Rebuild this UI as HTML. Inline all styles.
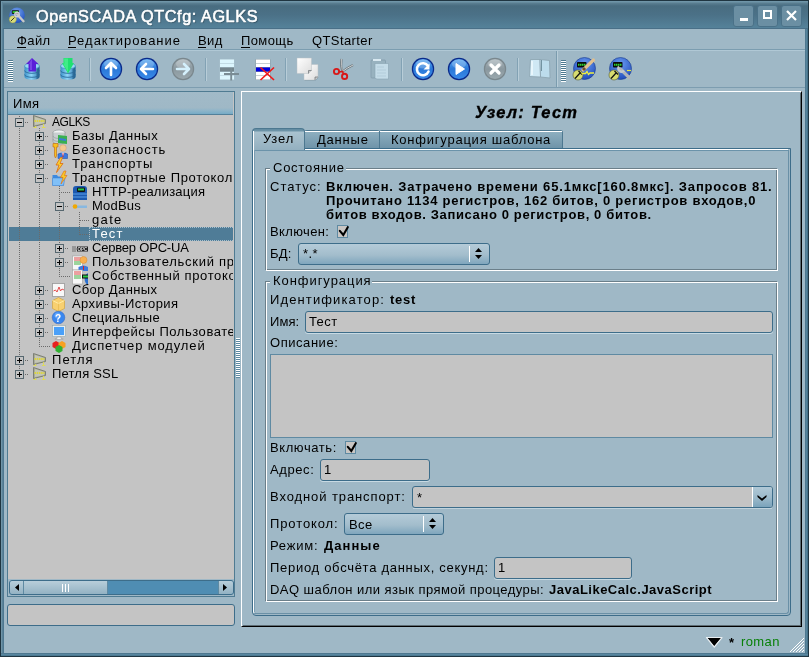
<!DOCTYPE html>
<html><head><meta charset="utf-8"><style>
*{box-sizing:border-box}
html,body{margin:0;padding:0}
body{width:809px;height:657px;overflow:hidden;position:relative;background:#9fb8c6;font-family:"Liberation Sans",sans-serif;font-size:13px;color:#000;letter-spacing:0.4px}
.a{position:absolute}
.t{position:absolute;white-space:nowrap;line-height:14px;will-change:transform}
.b{font-weight:bold;letter-spacing:0.75px}
svg{position:absolute;overflow:visible}
.exp{position:absolute;width:9px;height:9px;border:1px solid #56676f;background:#c4c4c4}
.exp:before{content:"";position:absolute;left:1px;top:3px;width:5px;height:1px;background:#000}
.exp.p:after{content:"";position:absolute;left:3px;top:1px;width:1px;height:5px;background:#000}
.dv{position:absolute;width:1px;background:repeating-linear-gradient(#6a6a6a 0,#6a6a6a 1px,transparent 1px,transparent 2px)}
.dh{position:absolute;height:1px;background:repeating-linear-gradient(90deg,#6a6a6a 0,#6a6a6a 1px,transparent 1px,transparent 2px)}
.edit{position:absolute;background:#c4c4c4;border:1px solid #3d6d8a;border-radius:3px}
.combo{position:absolute;border:1px solid #3d6d8a;border-radius:3px;background:linear-gradient(#b4cbd8,#a6bfcd 55%,#8badc0)}
.chk{position:absolute;width:12px;height:12px;border:1px solid #6d8797;background:#c4c4c4}
.sep{position:absolute;top:58px;width:2px;height:23px;border-left:1px solid #82a2b4;border-right:1px solid #b8cdd8}
.handle{position:absolute;width:5px;height:22px;background:repeating-linear-gradient(#4f7a90 0,#4f7a90 1px,#ffffff 1px,#ffffff 2px)}
</style></head><body>
<div class="a" style="left:0px;top:0px;width:809px;height:657px;background:#55819a"></div>
<div class="a" style="left:0px;top:0px;width:809px;height:1px;background:#1f3541"></div>
<div class="a" style="left:0px;top:0px;width:1px;height:657px;background:#1f3541"></div>
<div class="a" style="left:808px;top:0px;width:1px;height:657px;background:#1f3541"></div>
<div class="a" style="left:0px;top:656px;width:809px;height:1px;background:#1f3541"></div>
<div class="a" style="left:1px;top:1px;width:1px;height:655px;background:#6f95a8"></div>
<div class="a" style="left:2px;top:29px;width:1px;height:625px;background:#5a8299"></div>
<div class="a" style="left:3px;top:29px;width:1px;height:625px;background:#4e7890"></div>
<div class="a" style="left:805px;top:29px;width:1px;height:625px;background:#4e7890"></div>
<div class="a" style="left:806px;top:29px;width:1px;height:625px;background:#56849b"></div>
<div class="a" style="left:807px;top:29px;width:1px;height:627px;background:#46728a"></div>
<div class="a" style="left:1px;top:653px;width:807px;height:1px;background:#4e7890"></div>
<div class="a" style="left:1px;top:654px;width:807px;height:1px;background:#5987a0"></div>
<div class="a" style="left:1px;top:655px;width:807px;height:1px;background:#4d7a92"></div>
<div class="a" style="left:1px;top:1px;width:807px;height:28px;background:linear-gradient(#6f95a8 0px,#6f95a8 1px,#5b7f92 2px,#486c80 5px,#4b7187 14px,#55829a 27px,#4a7088 27px,#4a7088 28px)"></div>
<div class="a" style="left:1px;top:1px;width:1px;height:28px;background:#6f95a8"></div>
<div class="a" style="left:2px;top:2px;width:1px;height:27px;background:#5d8398"></div>
<div class="a" style="left:4px;top:29px;width:801px;height:624px;background:#9fb8c6"></div>
<svg style="left:8px;top:6px" width="18" height="18" viewBox="0 0 18 18">
<defs><radialGradient id="tig" cx="0.45" cy="0.3" r="0.7"><stop offset="0" stop-color="#7aa8f0"/><stop offset="1" stop-color="#2050c0"/></radialGradient></defs>
<circle cx="9" cy="9.2" r="7.8" fill="url(#tig)"/>
<rect x="3.8" y="4.2" width="7.2" height="3.7" rx="0.8" fill="#111"/><rect x="4.6" y="5" width="5.6" height="2.1" fill="#2ab830"/>
<circle cx="4.8" cy="13.3" r="3.6" fill="#d8dc78" stroke="#8a8c40" stroke-width="0.4"/><path d="M2.8 15.2 L6.5 11.5" stroke="#222" stroke-width="0.9"/>
<path d="M9 8.2 L15.5 15.2" stroke="#c8c8c8" stroke-width="2.4" stroke-linecap="round"/><circle cx="9" cy="8.5" r="2.2" fill="none" stroke="#d0d0d0" stroke-width="1.4"/>
</svg>
<div class="t" style="left:36px;top:7px;font-size:16.3px;line-height:18px;font-weight:normal;color:#fff;letter-spacing:0.55px;-webkit-text-stroke:0.55px #fff;text-shadow:1px 1px 1px rgba(30,50,60,0.5)">OpenSCADA QTCfg: AGLKS</div>
<div class="a" style="left:733px;top:5px;width:21px;height:22px;border:1px solid #4a7188;border-radius:3px;background:#6b8fa3"></div>
<div class="a" style="left:757px;top:5px;width:21px;height:22px;border:1px solid #4a7188;border-radius:3px;background:#6b8fa3"></div>
<div class="a" style="left:781px;top:5px;width:21px;height:22px;border:1px solid #4a7188;border-radius:3px;background:#6b8fa3"></div>
<div class="a" style="left:740px;top:18px;width:8px;height:3px;background:#fff"></div>
<div class="a" style="left:763px;top:10px;width:9px;height:9px;border:2px solid #fff;border-top-width:2px"></div>
<svg style="left:786px;top:10px" width="11" height="11"><path d="M1 1L10 10M10 1L1 10" stroke="#fff" stroke-width="2.2"/></svg>
<div class="a" style="left:4px;top:49px;width:801px;height:1px;background:#7b9db0"></div>
<div class="a" style="left:4px;top:50px;width:801px;height:1px;background:#b0c8d5"></div>
<div class="t " style="left:17px;top:34px;">Файл</div>
<div class="a" style="left:17px;top:47px;width:9px;height:1px;background:#000"></div>
<div class="t " style="left:68px;top:34px;letter-spacing:1px">Редактирование</div>
<div class="a" style="left:68px;top:47px;width:8px;height:1px;background:#000"></div>
<div class="t " style="left:198px;top:34px;">Вид</div>
<div class="a" style="left:198px;top:47px;width:8px;height:1px;background:#000"></div>
<div class="t " style="left:241px;top:34px;">Помощь</div>
<div class="a" style="left:241px;top:47px;width:9px;height:1px;background:#000"></div>
<div class="t " style="left:312px;top:34px;">QTStarter</div>
<div class="a" style="left:4px;top:87px;width:801px;height:1px;background:#7d9db0"></div>
<div class="handle" style="left:8px;top:60px"></div>
<div class="handle" style="left:561px;top:60px"></div>
<div class="sep" style="left:89px"></div>
<div class="sep" style="left:205px"></div>
<div class="sep" style="left:285px"></div>
<div class="sep" style="left:401px"></div>
<div class="sep" style="left:517px"></div>
<div class="a" style="left:556px;top:51px;width:1px;height:36px;background:#7b9cae"></div>
<div class="a" style="left:557px;top:51px;width:1px;height:36px;background:#b8cdd8"></div>
<svg style="left:99px;top:57px" width="24" height="24" viewBox="0 0 24 24">
<defs><linearGradient id="g111" x1="0" y1="0" x2="0" y2="1"><stop offset="0" stop-color="#5aa8f0"/><stop offset="0.5" stop-color="#2a78d8"/><stop offset="1" stop-color="#3a8ae8"/></linearGradient></defs>
<circle cx="12" cy="12" r="11.2" fill="#0a2a8a"/><circle cx="12" cy="12" r="10" fill="url(#g111)"/><ellipse cx="12" cy="7" rx="7" ry="4.5" fill="#fff" opacity="0.22"/><path d="M12 18 V6.5 M7 11 L12 6 L17 11" fill="none" stroke="#fff" stroke-width="2.6" stroke-linecap="round" stroke-linejoin="round"/></svg>
<svg style="left:135px;top:57px" width="24" height="24" viewBox="0 0 24 24">
<defs><linearGradient id="g147" x1="0" y1="0" x2="0" y2="1"><stop offset="0" stop-color="#5aa8f0"/><stop offset="0.5" stop-color="#2a78d8"/><stop offset="1" stop-color="#3a8ae8"/></linearGradient></defs>
<circle cx="12" cy="12" r="11.2" fill="#0a2a8a"/><circle cx="12" cy="12" r="10" fill="url(#g147)"/><ellipse cx="12" cy="7" rx="7" ry="4.5" fill="#fff" opacity="0.22"/><path d="M18 12 H6.5 M11 7 L6 12 L11 17" fill="none" stroke="#fff" stroke-width="2.6" stroke-linecap="round" stroke-linejoin="round"/></svg>
<svg style="left:171px;top:57px" width="24" height="24" viewBox="0 0 24 24">
<defs><linearGradient id="g183" x1="0" y1="0" x2="0" y2="1"><stop offset="0" stop-color="#a8b4ba"/><stop offset="0.5" stop-color="#8a989f"/><stop offset="1" stop-color="#9aa8ae"/></linearGradient></defs>
<circle cx="12" cy="12" r="11.2" fill="#7a878d"/><circle cx="12" cy="12" r="10" fill="url(#g183)"/><ellipse cx="12" cy="7" rx="7" ry="4.5" fill="#fff" opacity="0.22"/><path d="M6 12 H17.5 M13 7 L18 12 L13 17" fill="none" stroke="#d4f0fc" stroke-width="2.6" stroke-linecap="round" stroke-linejoin="round"/></svg>
<svg style="left:411px;top:57px" width="24" height="24" viewBox="0 0 24 24">
<defs><linearGradient id="g423" x1="0" y1="0" x2="0" y2="1"><stop offset="0" stop-color="#5aa8f0"/><stop offset="0.5" stop-color="#2a78d8"/><stop offset="1" stop-color="#3a8ae8"/></linearGradient></defs>
<circle cx="12" cy="12" r="11.2" fill="#0a2a8a"/><circle cx="12" cy="12" r="10" fill="url(#g423)"/><ellipse cx="12" cy="7" rx="7" ry="4.5" fill="#fff" opacity="0.22"/><path d="M17 9 A6 6 0 1 0 17.5 14.5" fill="none" stroke="#fff" stroke-width="2.6" stroke-linecap="round"/><path d="M12.5 12.5 L18.5 12.5 L18.5 6.5Z" fill="#fff"/></svg>
<svg style="left:447px;top:57px" width="24" height="24" viewBox="0 0 24 24">
<defs><linearGradient id="g459" x1="0" y1="0" x2="0" y2="1"><stop offset="0" stop-color="#5aa8f0"/><stop offset="0.5" stop-color="#2a78d8"/><stop offset="1" stop-color="#3a8ae8"/></linearGradient></defs>
<circle cx="12" cy="12" r="11.2" fill="#0a2a8a"/><circle cx="12" cy="12" r="10" fill="url(#g459)"/><ellipse cx="12" cy="7" rx="7" ry="4.5" fill="#fff" opacity="0.22"/><path d="M9 6.5 L17.5 12 L9 17.5Z" fill="#fff" stroke="#fff" stroke-width="1" stroke-linejoin="round"/></svg>
<svg style="left:483px;top:57px" width="24" height="24" viewBox="0 0 24 24">
<defs><linearGradient id="g495" x1="0" y1="0" x2="0" y2="1"><stop offset="0" stop-color="#a8b4ba"/><stop offset="0.5" stop-color="#8a989f"/><stop offset="1" stop-color="#9aa8ae"/></linearGradient></defs>
<circle cx="12" cy="12" r="11.2" fill="#7a878d"/><circle cx="12" cy="12" r="10" fill="url(#g495)"/><ellipse cx="12" cy="7" rx="7" ry="4.5" fill="#fff" opacity="0.22"/><path d="M8 8L16 16M16 8L8 16" stroke="#fff" stroke-width="3.2" stroke-linecap="round"/></svg>
<svg style="left:20px;top:57px" width="24" height="24" viewBox="0 0 24 24">
<defs><linearGradient id="dbg1" x1="0" x2="1"><stop offset="0" stop-color="#3a90c8"/><stop offset="0.45" stop-color="#8fd6f8"/><stop offset="1" stop-color="#2a78b0"/></linearGradient></defs>
<path d="M4.5 9 v11 a7.5 2.8 0 0 0 15 0 v-11" fill="url(#dbg1)"/>
<path d="M19.5 10 v10 a7.5 2.8 0 0 1 -3 2.2 v-10Z" fill="#1a4a70" opacity="0.5"/>
<path d="M4.5 13.5 a7.5 2.8 0 0 0 15 0 M4.5 17.5 a7.5 2.8 0 0 0 15 0" fill="none" stroke="#2a6a9a" stroke-width="0.9"/>
<ellipse cx="12" cy="9" rx="7.5" ry="2.8" fill="#9ad8f4" stroke="#3a88b8" stroke-width="0.6"/><path d="M12 1 L18.5 7 L16 7 L16 14.5 L8.5 14.5 L8.5 7 L6 7Z" fill="#5a20d8"/><path d="M11 3 L12 2 L12 13 L10 13 L10 7 L9 7Z" fill="#8a60f0" opacity="0.6"/></svg>
<svg style="left:56px;top:57px" width="24" height="24" viewBox="0 0 24 24">
<defs><linearGradient id="dbg2" x1="0" x2="1"><stop offset="0" stop-color="#3a90c8"/><stop offset="0.45" stop-color="#8fd6f8"/><stop offset="1" stop-color="#2a78b0"/></linearGradient></defs>
<path d="M4.5 9 v11 a7.5 2.8 0 0 0 15 0 v-11" fill="url(#dbg2)"/>
<path d="M19.5 10 v10 a7.5 2.8 0 0 1 -3 2.2 v-10Z" fill="#1a4a70" opacity="0.5"/>
<path d="M4.5 13.5 a7.5 2.8 0 0 0 15 0 M4.5 17.5 a7.5 2.8 0 0 0 15 0" fill="none" stroke="#2a6a9a" stroke-width="0.9"/>
<ellipse cx="12" cy="9" rx="7.5" ry="2.8" fill="#9ad8f4" stroke="#3a88b8" stroke-width="0.6"/><path d="M7.5 1 L16.5 1 L16.5 6 L18 6 L12 16.5 L6 6 L7.5 6Z" fill="#20e070"/><path d="M8 1.5 L12 1.5 L12 15 L7 6.5 L8.5 6.5Z" fill="#60f8a0" opacity="0.5"/></svg>
<svg style="left:218px;top:57px" width="24" height="24" viewBox="0 0 24 24">
<rect x="1.5" y="2" width="15" height="21" fill="#a8c0cc" rx="0.8"/>
<rect x="2" y="2.5" width="14" height="3.5" fill="#dcf6fe"/><rect x="2" y="6.5" width="14" height="3.5" fill="#dcf6fe"/><rect x="2" y="10.5" width="14" height="4" fill="#74868e"/><rect x="2" y="15" width="14" height="3.5" fill="#dcf6fe"/><rect x="2" y="19" width="14" height="3.5" fill="#dcf6fe"/>
<path d="M13.2 11 V23.5 M6 17 H21" stroke="#7a8c94" stroke-width="1.9"/></svg>
<svg style="left:254px;top:57px" width="24" height="24" viewBox="0 0 24 24">
<rect x="1.5" y="2" width="15" height="21" fill="#8c9ca4" rx="0.8"/>
<rect x="2" y="2.5" width="14" height="3.5" fill="#fff"/><rect x="2" y="6.5" width="14" height="3.5" fill="#fff"/><rect x="2" y="10.5" width="14" height="4" fill="#0000e0"/><rect x="2" y="15" width="14" height="3.5" fill="#fff"/><rect x="2" y="19" width="14" height="3.5" fill="#fff"/>
<path d="M6.5 10.5 L20 23 M20 10.5 L6.5 23" stroke="#f01818" stroke-width="1.7"/></svg>
<svg style="left:292px;top:54px" width="30" height="30" viewBox="0 0 30 30">
<defs><linearGradient id="cpg" x1="0" y1="0" x2="1" y2="1"><stop offset="0" stop-color="#ffffff"/><stop offset="1" stop-color="#dcdcdc"/></linearGradient></defs>
<path d="M12 10.5 H26 V23 L23 26 H12Z" fill="url(#cpg)" stroke="#b8c0c4" stroke-width="0.5"/><path d="M26 23 L23 23 L23 26" fill="#c8c8c8" stroke="#6a7074" stroke-width="0.7"/>
<path d="M5 4 H19.5 V16.5 L16.5 19.5 H5Z" fill="url(#cpg)" stroke="#b8c0c4" stroke-width="0.5"/><path d="M19.5 16.5 L16.5 16.5 L16.5 19.5" fill="#c8c8c8" stroke="#6a7074" stroke-width="0.7"/>
<path d="M12.5 26.5 H23.5 L26.5 23.5" fill="none" stroke="#7f98a6" stroke-width="0.8" opacity="0.6"/></svg>
<svg style="left:330px;top:54px" width="28" height="30" viewBox="0 0 28 30">
<path d="M11.5 5 Q10.5 12 12.5 17.5" fill="none" stroke="#6a7276" stroke-width="2"/><path d="M23 11 Q17 14 12.5 17.5" fill="none" stroke="#6a7276" stroke-width="2"/><path d="M23 11 Q17 14 12.5 17.5" fill="none" stroke="#e8ecee" stroke-width="0.8"/>
<path d="M11.5 5 Q11 12 12.5 17.5" fill="none" stroke="#f0f0f0" stroke-width="0.6"/>
<circle cx="6.5" cy="17.5" r="2.6" fill="none" stroke="#d81818" stroke-width="1.9"/><circle cx="14.6" cy="22.4" r="2.6" fill="none" stroke="#d81818" stroke-width="1.9"/><path d="M9 18 L12.5 17.5 L13.5 20" fill="none" stroke="#d81818" stroke-width="1.6"/></svg>
<svg style="left:368px;top:57px" width="24" height="24" viewBox="0 0 24 24">
<rect x="3" y="3" width="14.5" height="18" rx="1" fill="#98b2bf" stroke="#7c96a4" stroke-width="0.6"/><rect x="5" y="2" width="8" height="2" fill="#d8e8f0"/>
<path d="M7 6.5 H20.5 V22 H8.5 L7 20.5Z" fill="#c4dce8" stroke="#8aa4b2" stroke-width="0.6"/><path d="M9 10h7M9 13h9M9 16h9M9 19h9" stroke="#a8c2d0" stroke-width="0.6"/></svg>
<svg style="left:528px;top:57px" width="24" height="24" viewBox="0 0 24 24">
<path d="M2.5 2.5 L12 2.5 L12.5 20 L1.5 19.5Z" fill="#cfe8f4" stroke="#8aa2ae" stroke-width="0.8"/><path d="M12 2.5 L21.5 3.5 L22 21 L12.5 20Z" fill="#bcdcec" stroke="#8aa2ae" stroke-width="0.8"/><path d="M13.5 3 v11" stroke="#6a8a98" stroke-width="0.9"/><path d="M4 4 L4 18" stroke="#e8f6fc" stroke-width="2"/></svg>
<svg style="left:572px;top:57px" width="24" height="24" viewBox="0 0 24 24">
<defs><radialGradient id="ck1" cx="0.5" cy="0.3" r="0.75"><stop offset="0" stop-color="#6a9cf0"/><stop offset="1" stop-color="#1c46b8"/></radialGradient></defs>
<circle cx="12.5" cy="11.5" r="11" fill="url(#ck1)" stroke="#1a3a8a" stroke-width="0.6"/>
<rect x="5" y="5" width="9.5" height="5.5" rx="0.8" fill="#0a0a0a"/><path d="M6 7.8h7.5" stroke="#30d030" stroke-width="2" stroke-dasharray="1.5 0.5"/>
<circle cx="6" cy="18" r="5" fill="#d8dc70" stroke="#5a5c30" stroke-width="0.6"/><path d="M3 21.5 L8.5 15.5 M6.5 14 L10 17.5" stroke="#111" stroke-width="1.2"/><path d="M11 13 L21.5 3" stroke="#e0c090" stroke-width="3.2" stroke-linecap="round"/><path d="M11 13 L13 11" stroke="#6a5030" stroke-width="3"/><path d="M9.5 16.5 h4 l1.5 -2 l1.5 3 l1.5 -1.5 h4" fill="none" stroke="#f0f040" stroke-width="1.3"/></svg>
<svg style="left:608px;top:57px" width="24" height="24" viewBox="0 0 24 24">
<defs><radialGradient id="ck2" cx="0.5" cy="0.3" r="0.75"><stop offset="0" stop-color="#6a9cf0"/><stop offset="1" stop-color="#1c46b8"/></radialGradient></defs>
<circle cx="12.5" cy="11.5" r="11" fill="url(#ck2)" stroke="#1a3a8a" stroke-width="0.6"/>
<rect x="5" y="5" width="9.5" height="5.5" rx="0.8" fill="#0a0a0a"/><path d="M6 7.8h7.5" stroke="#30d030" stroke-width="2" stroke-dasharray="1.5 0.5"/>
<circle cx="6" cy="18" r="5" fill="#d8dc70" stroke="#5a5c30" stroke-width="0.6"/><path d="M3 21.5 L8.5 15.5 M6.5 14 L10 17.5" stroke="#111" stroke-width="1.2"/><path d="M12.5 12 L21 20.5" stroke="#b0b4b8" stroke-width="3.2" stroke-linecap="round"/><path d="M11 9.5 a3.2 3.2 0 1 0 5 4" fill="none" stroke="#c4c8cc" stroke-width="2.4"/><path d="M19 13.5 h4" stroke="#e8e840" stroke-width="1.2"/></svg>
<div class="a" style="left:7px;top:91px;width:228px;height:506px;border:1px solid #4f7b92;background:#c4c4c4"></div>
<div class="a" style="left:8px;top:92px;width:225px;height:22px;background:linear-gradient(#a1bac8 0,#9fb8c6 72%,#8db4c9 85%,#76abc6 100%)"></div>
<div class="a" style="left:8px;top:114px;width:225px;height:1px;background:#52809a"></div>
<div class="t " style="left:13px;top:97px;">Имя</div>
<div class="a" style="left:8px;top:115px;width:225px;height:465px;overflow:hidden">
<div class="a" style="left:1px;top:112px;width:225px;height:14px;background:#4f7c97"></div>
<div class="a" style="left:81px;top:112px;width:146px;height:14px;border:1px dotted #a9bfcc"></div>
<div class="dv" style="left:11px;top:1px;height:240px"></div>
<div class="dv" style="left:11px;top:251px;height:4px"></div>
<div class="dv" style="left:31px;top:13px;height:219px"></div>
<div class="dv" style="left:51px;top:69px;height:93px"></div>
<div class="dv" style="left:71px;top:97px;height:23px"></div>
<div class="dh" style="left:17px;top:7px;width:4px"></div>
<div class="exp " style="left:7px;top:3px"></div>
<svg style="left:24px;top:0px" width="16" height="16" viewBox="0 0 16 16"><path d="M1.5 0.5 L13.5 4.5 L13.5 8.5 L1.5 11.5Z" fill="#a9ab9c" stroke="#6f7266" stroke-width="0.8"/><path d="M3 2 L12 5 L12 8 L3 10Z" fill="#c4c6b4"/><path d="M2.5 6h10" stroke="#dcd440" stroke-width="2" stroke-dasharray="1.5 0.7"/><path d="M1.5 12.5h3M10 12.5h3.5M3.5 11v1.5M11.5 9v3.5" stroke="#e0dc50" stroke-width="0.9"/></svg>
<div class="t" style="left:44px;top:0px;font-size:12px;letter-spacing:-0.450px;">AGLKS</div>
<div class="dh" style="left:37px;top:21px;width:4px"></div>
<div class="exp p" style="left:27px;top:17px"></div>
<svg style="left:44px;top:14px" width="16" height="16" viewBox="0 0 16 16"><ellipse cx="7" cy="3.5" rx="6" ry="2.5" fill="#f0f2f2" stroke="#8c9496" stroke-width="0.6"/><path d="M1 3.5v9a6 2.5 0 0 0 12 0v-9" fill="#c8ced0" stroke="#8c9496" stroke-width="0.6"/><path d="M1 7a6 2.5 0 0 0 12 0M1 10a6 2.5 0 0 0 12 0" fill="none" stroke="#8c9496" stroke-width="0.6"/><path d="M6 6 L15 7 L15 15 L6 14Z" fill="#38b050"/><path d="M7 9 L14 10 L14 12 L7 11Z" fill="#3a7ad8"/></svg>
<div class="t" style="left:64px;top:14px;letter-spacing:0.490px;">Базы Данных</div>
<div class="dh" style="left:37px;top:35px;width:4px"></div>
<div class="exp p" style="left:27px;top:31px"></div>
<svg style="left:44px;top:28px" width="16" height="16" viewBox="0 0 16 16"><path d="M1 0.5h5v3.5h-1.5v9l-1 2-1-2v-9H1Z" fill="#f8c020" stroke="#c06810" stroke-width="0.6"/><circle cx="11" cy="5" r="3.3" fill="#f4c890" stroke="#c89060" stroke-width="0.4"/><path d="M6 15.5 L6 11 Q11 8 15.5 11 L15.5 15.5Z" fill="#3a78e0" stroke="#1a4aa0" stroke-width="0.5"/><path d="M9.5 9.5 L12.5 9.5 L11 13Z" fill="#fff"/><path d="M10.6 10h0.8v4h-0.8z" fill="#d82020"/></svg>
<div class="t" style="left:64px;top:28px;letter-spacing:0.945px;">Безопасность</div>
<div class="dh" style="left:37px;top:49px;width:4px"></div>
<div class="exp p" style="left:27px;top:45px"></div>
<svg style="left:44px;top:42px" width="16" height="16" viewBox="0 0 16 16"><path d="M8.5 0.5 L4 8 L7 8 L4.5 15.5 L11 6.5 L8 6.5 L10.5 0.5Z" fill="#f8d030" stroke="#e06a10" stroke-width="0.8"/></svg>
<div class="t" style="left:64px;top:42px;letter-spacing:0.944px;">Транспорты</div>
<div class="dh" style="left:37px;top:63px;width:4px"></div>
<div class="exp " style="left:27px;top:59px"></div>
<svg style="left:44px;top:56px" width="16" height="16" viewBox="0 0 16 16"><path d="M0.5 4 L5 4 L6 5.5 L12 5.5 L12 14.5 L0.5 14.5Z" fill="#3c8ae0"/><path d="M0.5 7 L13 7 L11.5 14.5 L0.5 14.5Z" fill="#80c0f8" stroke="#3c80d0" stroke-width="0.5"/><path d="M12 0 L8.5 6.5 L11 6.5 L9 13 L15 4.5 L12.5 4.5 L14 0Z" fill="#f8c828" stroke="#e06a10" stroke-width="0.6"/></svg>
<div class="t" style="left:64px;top:56px;letter-spacing:0.676px;">Транспортные Протоколы</div>
<div class="dh" style="left:51px;top:77px;width:11px"></div>
<svg style="left:64px;top:70px" width="16" height="16" viewBox="0 0 16 16"><path d="M1 4 Q1 1 4 1 L12 1 Q15 1 15 4 L15 15 L1 15Z" fill="#1c5ab0"/><rect x="5" y="2.5" width="8" height="4.5" rx="1" fill="#111"/><rect x="6" y="3.5" width="6" height="2" fill="#28c848"/><path d="M1 9h14M1 12h14" stroke="#5aa0e8" stroke-width="1"/></svg>
<div class="t" style="left:84px;top:70px;letter-spacing:0.236px;">HTTP-реализация</div>
<div class="dh" style="left:57px;top:91px;width:4px"></div>
<div class="exp " style="left:47px;top:87px"></div>
<svg style="left:64px;top:84px" width="16" height="16" viewBox="0 0 16 16"><rect x="3" y="6.5" width="12" height="2.5" fill="#88b8e0"/><circle cx="3" cy="7.5" r="2.3" fill="#f0a800"/></svg>
<div class="t" style="left:84px;top:84px;letter-spacing:0.200px;">ModBus</div>
<div class="dh" style="left:72px;top:105px;width:10px"></div>
<div class="t" style="left:84px;top:98px;letter-spacing:1.333px;">gate</div>
<div class="dh" style="left:72px;top:119px;width:10px"></div>
<div class="t" style="left:84px;top:112px;color:#fff;letter-spacing:1.200px;">Тест</div>
<div class="dh" style="left:57px;top:133px;width:4px"></div>
<div class="exp p" style="left:47px;top:129px"></div>
<svg style="left:64px;top:126px" width="16" height="16" viewBox="0 0 16 16"><path d="M0 6h4M0 8h5M0 10h4" stroke="#555" stroke-width="0.8"/><rect x="5" y="5.5" width="11" height="5" fill="#222"/><text x="5.5" y="9.6" font-size="4.5" font-weight="bold" fill="#ddd" font-family="Liberation Sans" letter-spacing="0">OPC</text></svg>
<div class="t" style="left:84px;top:126px;letter-spacing:-0.200px;">Сервер OPC-UA</div>
<div class="dh" style="left:57px;top:147px;width:4px"></div>
<div class="exp p" style="left:47px;top:143px"></div>
<svg style="left:64px;top:140px" width="16" height="16" viewBox="0 0 16 16"><rect x="0.5" y="1" width="10" height="14" fill="#f8f8f8" stroke="#a0a0a0" stroke-width="0.6"/><path d="M2 3h7M2 5h7" stroke="#e04848" stroke-width="1"/><path d="M2 7h7M2 9h7" stroke="#40b040" stroke-width="1"/><circle cx="11.5" cy="5" r="3.5" fill="#f8b050" stroke="#d08020" stroke-width="0.4"/><path d="M6.5 16 L6.5 12 Q11.5 9 16 12 L16 16Z" fill="#3a78e0"/><path d="M11 11h1v4h-1z" fill="#d82020"/></svg>
<div class="t" style="left:84px;top:140px;letter-spacing:0.729px;">Пользовательский протокол</div>
<div class="dh" style="left:51px;top:161px;width:11px"></div>
<svg style="left:64px;top:154px" width="16" height="16" viewBox="0 0 16 16"><rect x="0.5" y="1" width="10" height="14" fill="#f8f8f8" stroke="#a0a0a0" stroke-width="0.6"/><path d="M2 3h7M2 5h7" stroke="#e04848" stroke-width="1"/><path d="M2 7h7M2 9h7" stroke="#40b040" stroke-width="1"/><path d="M16 4 A7 7 0 0 0 16 16Z" fill="#2a70d0"/><rect x="10" y="5.5" width="6" height="4" fill="#111"/><rect x="11" y="6.5" width="5" height="2" fill="#28c848"/></svg>
<div class="t" style="left:84px;top:154px;letter-spacing:0.632px;">Собственный протокол</div>
<div class="dh" style="left:37px;top:175px;width:4px"></div>
<div class="exp p" style="left:27px;top:171px"></div>
<svg style="left:44px;top:168px" width="16" height="16" viewBox="0 0 16 16"><rect x="0.5" y="0.5" width="12" height="13" fill="#f8f8f8" stroke="#9a9a9a" stroke-width="0.8"/><path d="M1.5 8 L3.5 7 L5 9 L7 4 L8.5 8 L10 6 L12 7" fill="none" stroke="#e03a3a" stroke-width="0.9"/></svg>
<div class="t" style="left:64px;top:168px;letter-spacing:0.390px;">Сбор Данных</div>
<div class="dh" style="left:37px;top:189px;width:4px"></div>
<div class="exp p" style="left:27px;top:185px"></div>
<svg style="left:44px;top:182px" width="16" height="16" viewBox="0 0 16 16"><path d="M0.5 3.5 L6.5 0.5 L12.5 3.5 L12.5 11.5 L6.5 14.5 L0.5 11.5Z" fill="#f8d070" stroke="#d0a030" stroke-width="0.6"/><path d="M0.5 3.5 L6.5 6.5 L12.5 3.5" fill="none" stroke="#fff0b0" stroke-width="0.8"/><path d="M6.5 6.5v8" stroke="#e0b040" stroke-width="0.5"/></svg>
<div class="t" style="left:64px;top:182px;letter-spacing:0.423px;">Архивы-История</div>
<div class="dh" style="left:37px;top:203px;width:4px"></div>
<div class="exp p" style="left:27px;top:199px"></div>
<svg style="left:44px;top:196px" width="16" height="16" viewBox="0 0 16 16"><circle cx="6.5" cy="6.5" r="6.3" fill="#3a88f0" stroke="#2a62c0" stroke-width="0.5"/><circle cx="5.5" cy="4.5" r="3" fill="#7ab8ff" opacity="0.6"/><text x="3" y="11" font-size="10" font-weight="bold" fill="#fff" font-family="Liberation Sans" letter-spacing="0">?</text></svg>
<div class="t" style="left:64px;top:196px;letter-spacing:0.400px;">Специальные</div>
<div class="dh" style="left:37px;top:217px;width:4px"></div>
<div class="exp p" style="left:27px;top:213px"></div>
<svg style="left:44px;top:210px" width="16" height="16" viewBox="0 0 16 16"><rect x="0.5" y="0.5" width="13" height="11" fill="#e8eef0" stroke="#9aa" stroke-width="0.6"/><rect x="2" y="2" width="10" height="8" fill="#4aa0f8"/><path d="M5 12h4v1.5h2v1H3v-1h2Z" fill="#f0f0f0" stroke="#909090" stroke-width="0.5"/></svg>
<div class="t" style="left:64px;top:210px;letter-spacing:0.545px;">Интерфейсы Пользователя</div>
<div class="dh" style="left:31px;top:231px;width:11px"></div>
<svg style="left:44px;top:224px" width="16" height="16" viewBox="0 0 16 16"><path d="M0.5 4 L4 2 L7.5 4 L7.5 8 L4 10 L0.5 8Z" fill="#e82020"/><path d="M6.5 4 L10 2 L13.5 4 L13.5 8 L10 10 L6.5 8Z" fill="#f8a020"/><path d="M3.5 8 L7 6 L10.5 8 L10.5 12 L7 14 L3.5 12Z" fill="#30b030"/></svg>
<div class="t" style="left:64px;top:224px;letter-spacing:0.856px;">Диспетчер модулей</div>
<div class="dh" style="left:17px;top:245px;width:4px"></div>
<div class="exp p" style="left:7px;top:241px"></div>
<svg style="left:24px;top:238px" width="16" height="16" viewBox="0 0 16 16"><path d="M1.5 0.5 L13.5 4.5 L13.5 8.5 L1.5 11.5Z" fill="#a9ab9c" stroke="#6f7266" stroke-width="0.8"/><path d="M3 2 L12 5 L12 8 L3 10Z" fill="#c4c6b4"/><path d="M2.5 6h10" stroke="#dcd440" stroke-width="2" stroke-dasharray="1.5 0.7"/><path d="M1.5 12.5h3M10 12.5h3.5M3.5 11v1.5M11.5 9v3.5" stroke="#e0dc50" stroke-width="0.9"/></svg>
<div class="t" style="left:44px;top:238px;letter-spacing:1.050px;">Петля</div>
<div class="dh" style="left:17px;top:259px;width:4px"></div>
<div class="exp p" style="left:7px;top:255px"></div>
<svg style="left:24px;top:252px" width="16" height="16" viewBox="0 0 16 16"><path d="M1.5 0.5 L13.5 4.5 L13.5 8.5 L1.5 11.5Z" fill="#a9ab9c" stroke="#6f7266" stroke-width="0.8"/><path d="M3 2 L12 5 L12 8 L3 10Z" fill="#c4c6b4"/><path d="M2.5 6h10" stroke="#dcd440" stroke-width="2" stroke-dasharray="1.5 0.7"/><path d="M1.5 12.5h3M10 12.5h3.5M3.5 11v1.5M11.5 9v3.5" stroke="#e0dc50" stroke-width="0.9"/></svg>
<div class="t" style="left:44px;top:252px;letter-spacing:0.188px;">Петля SSL</div>
</div>
<div class="a" style="left:8px;top:579px;width:226px;height:17px;background:#9fb8c6"></div>
<div class="a" style="left:9px;top:580px;width:225px;height:15px;border:1px solid #3d6d8a;border-radius:3px;background:#4f8db3"></div>
<div class="a" style="left:10px;top:581px;width:14px;height:13px;background:linear-gradient(#b8ceda,#93b2c3);border-right:1px solid #5f8aa2;border-radius:2px 0 0 2px"></div>
<svg style="left:15px;top:584px" width="5" height="7"><path d="M4 0 L0 3.5 L4 7Z" fill="#000"/></svg>
<div class="a" style="left:24px;top:581px;width:84px;height:13px;background:linear-gradient(#b8ceda,#93b2c3);border-right:1px solid #5f8aa2"></div>
<div class="a" style="left:62px;top:584px;width:1px;height:8px;background:#fff"></div>
<div class="a" style="left:65px;top:584px;width:1px;height:8px;background:#fff"></div>
<div class="a" style="left:68px;top:584px;width:1px;height:8px;background:#fff"></div>
<div class="a" style="left:218px;top:581px;width:15px;height:13px;background:linear-gradient(#b8ceda,#93b2c3);border-left:1px solid #5f8aa2;border-radius:0 2px 2px 0"></div>
<svg style="left:223px;top:584px" width="5" height="7"><path d="M0 0 L4 3.5 L0 7Z" fill="#000"/></svg>
<div class="a" style="left:7px;top:604px;width:228px;height:22px;border:1px solid #3d6d8a;border-radius:3px;background:#c4c4c4"></div>
<div class="a" style="left:236px;top:338px;width:4px;height:40px;background:repeating-linear-gradient(#ffffff 0,#ffffff 1px,#5d88a0 1px,#5d88a0 2px)"></div>
<div class="a" style="left:241px;top:91px;width:561px;height:536px;border-top:1px solid #fff;border-left:1px solid #fff;border-right:1px solid #000;border-bottom:1px solid #000"></div>
<div class="a" style="left:800px;top:93px;width:1px;height:532px;background:#5d6d75"></div>
<div class="a" style="left:243px;top:625px;width:558px;height:1px;background:#5d6d75"></div>
<div class="t" style="left:475px;top:102px;font-size:16.5px;line-height:20px;font-weight:bold;font-style:italic;letter-spacing:1.2px;-webkit-text-stroke:0.35px #000">Узел: Тест</div>
<div class="a" style="left:252px;top:148px;width:539px;height:468px;border:1px solid #3d6d8a;border-radius:0 0 4px 4px"></div>
<div class="a" style="left:253px;top:149px;width:536px;height:465px;border-left:1px solid #fff;border-top:1px solid #fff;border-right:1px solid #6a90a6;border-bottom:1px solid #6a90a6;border-radius:0 0 3px 3px"></div>
<div class="a" style="left:254px;top:150px;width:534px;height:1px;background:#6b93aa"></div>
<div class="a" style="left:254px;top:150px;width:1px;height:462px;background:#7a9db2"></div>
<div class="a" style="left:304px;top:130px;width:76px;height:18px;border:1px solid #4d7890;border-bottom:none;border-radius:3px 3px 0 0;background:linear-gradient(#8fb0c1,#6f94a9)"></div>
<div class="a" style="left:305px;top:131px;width:74px;height:1px;background:#fff"></div>
<div class="a" style="left:379px;top:130px;width:184px;height:18px;border:1px solid #4d7890;border-bottom:none;border-radius:3px 3px 0 0;background:linear-gradient(#8fb0c1,#6f94a9)"></div>
<div class="a" style="left:380px;top:131px;width:182px;height:1px;background:#fff"></div>
<div class="a" style="left:252px;top:128px;width:53px;height:22px;border:1px solid #4d7890;border-bottom:none;border-radius:4px 4px 0 0;background:linear-gradient(#5f8aa2 0,#6f95a8 2px,#a9c2cf 3px,#9fb9c7 60%,#93b0c0)"></div>
<div class="a" style="left:253px;top:131px;width:1px;height:19px;background:#fff"></div>
<div class="t " style="left:263px;top:132px;letter-spacing:0.833px;">Узел</div>
<div class="t " style="left:317px;top:133px;letter-spacing:0.780px;">Данные</div>
<div class="t " style="left:391px;top:133px;letter-spacing:0.768px;">Конфигурация шаблона</div>
<div class="a" style="left:265px;top:168px;width:512px;height:102px;border:1px solid #6b7f8a"></div>
<div class="a" style="left:266px;top:169px;width:512px;height:102px;border:1px solid #ffffff"></div>
<div class="a" style="left:270px;top:166px;width:76px;height:5px;background:#9fb8c6"></div>
<div class="t " style="left:273px;top:161px;letter-spacing:0.750px;">Состояние</div>
<div class="a" style="left:265px;top:281px;width:512px;height:320px;border:1px solid #6b7f8a"></div>
<div class="a" style="left:266px;top:282px;width:512px;height:320px;border:1px solid #ffffff"></div>
<div class="a" style="left:270px;top:279px;width:102.4px;height:5px;background:#9fb8c6"></div>
<div class="t " style="left:273px;top:274px;letter-spacing:0.945px;">Конфигурация</div>
<div class="t " style="left:270px;top:180px;letter-spacing:1.000px;">Статус:</div>
<div class="t b" style="left:326px;top:180px;letter-spacing:0.825px;">Включен. Затрачено времени 65.1мкс[160.8мкс]. Запросов 81.</div>
<div class="t b" style="left:326px;top:194px;letter-spacing:0.750px;">Прочитано 1134 регистров, 162 битов, 0 регистров входов,0</div>
<div class="t b" style="left:326px;top:208px;letter-spacing:0.637px;">битов входов. Записано 0 регистров, 0 битов.</div>
<div class="t " style="left:270px;top:225px;letter-spacing:0.371px;">Включен:</div>
<div class="a" style="left:337px;top:225px;width:11px;height:13px;border:1px solid #5f8aa2;background:#c8c6c4"></div>
<svg style="left:337px;top:225px" width="12" height="13"><path d="M2.8 5.8 L6.3 10 L10.8 2.2" fill="none" stroke="#000" stroke-width="2.1" stroke-linecap="round"/></svg>
<div class="t " style="left:270px;top:247px;letter-spacing:0.250px;">БД:</div>
<div class="a" style="left:298px;top:243px;width:192px;height:22px;border:1px solid #3d6d8a;border-radius:3px;background:linear-gradient(#b4cbd8,#a3bdcc 55%,#7fa6bd)"></div>
<div class="a" style="left:469px;top:246px;width:1px;height:16px;background:#fff"></div>
<svg style="left:475px;top:248px" width="8" height="12"><path d="M0 4 L3.5 0 L7 4Z M0 7 L3.5 11 L7 7Z" fill="#000"/></svg>
<div class="t " style="left:303px;top:247px;">*.*</div>
<div class="t " style="left:270px;top:293px;letter-spacing:1.123px;">Идентификатор:</div>
<div class="t b" style="left:390px;top:293px;">test</div>
<div class="t " style="left:270px;top:315px;letter-spacing:0.067px;">Имя:</div>
<div class="a" style="left:305px;top:311px;width:468px;height:22px;border:1px solid #3d6d8a;border-radius:3px;background:#c4c4c4;box-shadow:0 1px 0 #c8dae3"></div>
<div class="t " style="left:309px;top:315px;">Тест</div>
<div class="t " style="left:270px;top:336px;letter-spacing:0.550px;">Описание:</div>
<div class="a" style="left:270px;top:354px;width:503px;height:84px;border:1px solid #5f8aa2;background:#c4c4c4"></div>
<div class="t " style="left:270px;top:441px;letter-spacing:0.587px;">Включать:</div>
<div class="a" style="left:345px;top:441px;width:11px;height:13px;border:1px solid #5f8aa2;background:#c8c6c4"></div>
<svg style="left:345px;top:441px" width="12" height="13"><path d="M2.8 5.8 L6.3 10 L10.8 2.2" fill="none" stroke="#000" stroke-width="2.1" stroke-linecap="round"/></svg>
<div class="t " style="left:270px;top:463px;letter-spacing:0.600px;">Адрес:</div>
<div class="a" style="left:320px;top:459px;width:110px;height:22px;border:1px solid #3d6d8a;border-radius:3px;background:#c4c4c4;box-shadow:0 1px 0 #c8dae3"></div>
<div class="t " style="left:324px;top:463px;">1</div>
<div class="t " style="left:270px;top:490px;letter-spacing:0.900px;">Входной транспорт:</div>
<div class="a" style="left:412px;top:486px;width:361px;height:22px;border:1px solid #3d6d8a;border-radius:3px;background:#c4c4c4"></div>
<div class="a" style="left:752px;top:487px;width:20px;height:20px;border-left:1px solid #ffffff;background:linear-gradient(#b0c8d6,#9bb9ca 55%,#7aa3bb);border-radius:0 2px 2px 0"></div>
<svg style="left:757px;top:494px" width="10" height="8"><path d="M0.5 1 L5 4.5 L9.5 1 L9.5 3 L5 7 L0.5 3Z" fill="#000"/></svg>
<div class="a" style="left:413px;top:508px;width:359px;height:1px;background:#c0d2dc"></div>
<div class="t " style="left:417px;top:491px;">*</div>
<div class="t " style="left:270px;top:517px;letter-spacing:0.888px;">Протокол:</div>
<div class="a" style="left:344px;top:513px;width:100px;height:22px;border:1px solid #3d6d8a;border-radius:3px;background:linear-gradient(#b4cbd8,#a3bdcc 55%,#7fa6bd)"></div>
<div class="a" style="left:423px;top:516px;width:1px;height:16px;background:#fff"></div>
<svg style="left:429px;top:518px" width="8" height="12"><path d="M0 4 L3.5 0 L7 4Z M0 7 L3.5 11 L7 7Z" fill="#000"/></svg>
<div class="t " style="left:349px;top:518px;">Все</div>
<div class="t " style="left:270px;top:539px;letter-spacing:0.760px;">Режим:</div>
<div class="t b" style="left:324px;top:539px;letter-spacing:1.040px;">Данные</div>
<div class="t " style="left:270px;top:561px;letter-spacing:0.710px;">Период обсчёта данных, секунд:</div>
<div class="a" style="left:494px;top:557px;width:138px;height:22px;border:1px solid #3d6d8a;border-radius:3px;background:#c4c4c4;box-shadow:0 1px 0 #c8dae3"></div>
<div class="t " style="left:498px;top:561px;">1</div>
<div class="t " style="left:270px;top:583px;letter-spacing:0.450px;">DAQ шаблон или язык прямой процедуры:</div>
<div class="t b" style="left:549px;top:583px;letter-spacing:0.491px;">JavaLikeCalc.JavaScript</div>
<svg style="left:705px;top:636px" width="19" height="13"><path d="M1.5 1.5 L17 1.5 L9.25 11Z" fill="#000" stroke="#e8eef2" stroke-width="1.2" stroke-linejoin="round"/><path d="M3 2 L15.5 2 L9.25 9.5Z" fill="#000"/></svg>
<div class="t " style="left:729px;top:636px;font-weight:bold">*</div>
<div class="t " style="left:741px;top:635px;color:#088008">roman</div>
<svg style="left:788px;top:636px" width="17" height="17"><path d="M16 2L2 16M16 5L5 16M16 8L8 16M16 11L11 16M16 14L14 16" stroke="#fff" stroke-width="1"/></svg>
</body></html>
